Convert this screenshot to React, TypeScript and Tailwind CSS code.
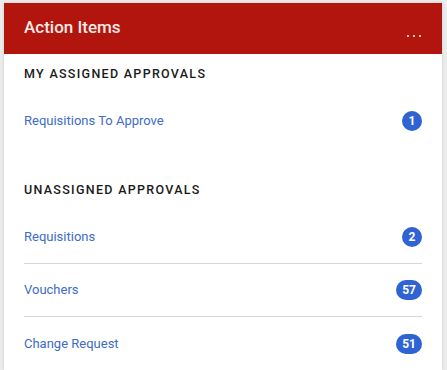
import React from "react";

function Badge({ n }: { n: string }) {
  return (
    <span className="flex h-[20px] min-w-[20px] items-center justify-center rounded-full bg-[#2f62d2] px-[6px] text-[12px] font-bold leading-none text-white">
      {n}
    </span>
  );
}

function Row({ label, n, border }: { label: string; n: string; border?: boolean }) {
  return (
    <div className={`flex h-[53px] items-center justify-between ${border ? "border-b border-[#d6d6d6]" : ""}`}>
      <span className="text-[13px] text-[#3d6cc6]">{label}</span>
      <Badge n={n} />
    </div>
  );
}

export default function App() {
  return (
    <div className="h-[370px] w-[447px] bg-[#ececec] pl-[4px] pr-[5px] pt-[3px]" style={{ fontFamily: "Roboto, 'Noto Sans', sans-serif" }}>
      <div className="h-full bg-white shadow-[0_0_3px_rgba(0,0,0,0.15)]">
        <div className="flex h-[51px] items-start justify-between bg-[#b2150d] pl-[20px] pr-[21px]">
          <span className="mt-[13px] text-[17px] font-medium leading-[22px] text-[#fde9e6]">Action Items</span>
          <span className="mt-[32px] flex gap-[4px]">
            <span className="h-[2px] w-[2px] bg-[#f5c2b8]" />
            <span className="h-[2px] w-[2px] bg-[#f5c2b8]" />
            <span className="h-[2px] w-[2px] bg-[#f5c2b8]" />
          </span>
        </div>
        <div className="px-[20px]">
          <div className="pt-[12px] text-[12.5px] font-medium leading-[16px] tracking-[1.3px] text-[#1a1a1a]">MY ASSIGNED APPROVALS</div>
          <div className="mt-[12px]">
            <Row label="Requisitions To Approve" n="1" />
          </div>
          <div className="mt-[35px] text-[12.5px] font-medium leading-[16px] tracking-[1.3px] text-[#1a1a1a]">UNASSIGNED APPROVALS</div>
          <div className="mt-[13px]">
            <Row label="Requisitions" n="2" border />
            <Row label="Vouchers" n="57" border />
            <Row label="Change Request" n="51" />
          </div>
        </div>
      </div>
    </div>
  );
}
